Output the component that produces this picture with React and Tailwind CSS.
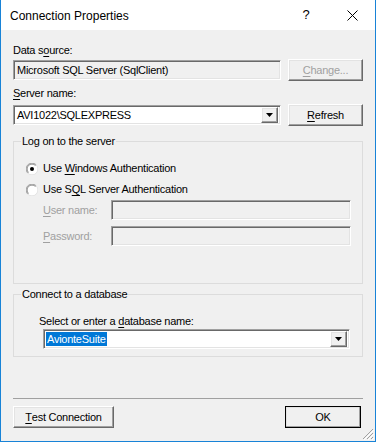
import React from "react";

const sunken =
  "border border-t-[#a0a0a0] border-l-[#a0a0a0] border-b-white border-r-white shadow-[inset_1px_1px_0_#696969,inset_-1px_-1px_0_#e3e3e3]";
const raised =
  "border border-t-white border-l-white border-b-[#696969] border-r-[#696969] shadow-[inset_-1px_-1px_0_#a0a0a0,inset_1px_1px_0_#e3e3e3] bg-[#f0f0f0]";

function Key({ children }) {
  return <span className="underline underline-offset-[2px]">{children}</span>;
}

function Radio({ checked }) {
  return (
    <svg width="12" height="12" viewBox="0 0 12 12" className="shrink-0">
      <circle cx="6" cy="6" r="5.5" fill="#fff" />
      <path d="M1.8 10.2 A5.5 5.5 0 0 1 10.2 1.8" fill="none" stroke="#a0a0a0" strokeWidth="1" />
      <path d="M10.2 1.8 A5.5 5.5 0 0 1 1.8 10.2" fill="none" stroke="#e3e3e3" strokeWidth="1" />
      <path d="M2.5 9.5 A4.5 4.5 0 0 1 9.5 2.5" fill="none" stroke="#8a8a8a" strokeWidth="1" />
      {checked && <circle cx="6" cy="6" r="2" fill="#000" />}
    </svg>
  );
}

function DropButton() {
  return (
    <div className={`w-[17px] h-[16px] flex items-center justify-center ${raised}`}>
      <svg width="7" height="4" viewBox="0 0 7 4">
        <path d="M0 0h7L3.5 4z" fill="#000" />
      </svg>
    </div>
  );
}

function Button({ children, className = "", disabled }) {
  return (
    <div
      className={`h-[22px] flex items-center justify-center ${raised} ${
        disabled ? "text-[#a0a0a0]" : "text-black"
      } ${className}`}
    >
      {children}
    </div>
  );
}

export default function App() {
  return (
    <div className="w-[376px] h-[442px] flex flex-col bg-[#f0f0f0] border-x border-b border-[#1883d7] font-['Liberation_Sans',Arial,sans-serif] text-[11px] leading-[13px] tracking-[-0.25px] text-black relative overflow-hidden">
      {/* title bar */}
      <div className="h-[30px] shrink-0 bg-white flex items-start">
        <div className="flex-1 pl-[9px] pt-[8px] text-[12px] leading-[16px] tracking-normal">
          Connection Properties
        </div>
        <div className="w-[46px] pt-[7px] text-center text-[13px] leading-[16px] tracking-normal">?</div>
        <div className="w-[46px] h-[30px] flex items-center justify-center">
          <svg width="11" height="11" viewBox="0 0 11 11">
            <path d="M0.5 0.5L10.5 10.5M10.5 0.5L0.5 10.5" stroke="#000" strokeWidth="1" />
          </svg>
        </div>
      </div>

      {/* body */}
      <div className="flex-1 flex flex-col px-[12px]">
        <div className="mt-[14px]">
          Data s<Key>o</Key>urce:
        </div>
        <div className="mt-[2px] h-[22px] flex items-center gap-[7px]">
          <div className={`w-[268px] h-[20px] flex items-center pl-[3px] bg-[#f0f0f0] ${sunken}`}>
            Microsoft SQL Server (SqlClient)
          </div>
          <Button className="w-[75px]" disabled>
            <Key>C</Key>hange...
          </Button>
        </div>

        <div className="mt-[6px]">
          <Key>S</Key>erver name:
        </div>
        <div className="mt-[4px] h-[22px] flex items-center gap-[7px]">
          <div className={`w-[268px] h-[20px] flex items-center pl-[3px] pr-[2px] bg-white ${sunken}`}>
            <span className="flex-1">AVI1022\SQLEXPRESS</span>
            <DropButton />
          </div>
          <Button className="w-[75px]">
            <Key>R</Key>efresh
          </Button>
        </div>

        <fieldset className="mt-[9px] h-[149px] border border-[#dcdcdc]">
          <legend className="ml-[7px] px-[1px]">Log on to the server</legend>
          <div className="pt-[14px] pl-[12px] flex flex-col">
            <div className="h-[13px] flex items-center gap-[5px]">
              <Radio checked />
              <span>
                Use <Key>W</Key>indows Authentication
              </span>
            </div>
            <div className="mt-[8px] h-[13px] flex items-center gap-[5px]">
              <Radio />
              <span>
                Use S<Key>Q</Key>L Server Authentication
              </span>
            </div>
            <div className="mt-[4px] flex items-center pl-[17px] text-[#a0a0a0]">
              <div className="w-[68px]">
                <Key>U</Key>ser name:
              </div>
              <div className={`w-[240px] h-[20px] bg-[#f0f0f0] ${sunken}`} />
            </div>
            <div className="mt-[6px] flex items-center pl-[17px] text-[#a0a0a0]">
              <div className="w-[68px]">
                <Key>P</Key>assword:
              </div>
              <div className={`w-[240px] h-[20px] bg-[#f0f0f0] ${sunken}`} />
            </div>
          </div>
        </fieldset>

        <fieldset className="mt-[4px] h-[69px] border border-[#dcdcdc]">
          <legend className="ml-[7px] px-[1px]">Connect to a database</legend>
          <div className="pt-[14px] pl-[25px] flex flex-col">
            <div>
              Select or enter a <Key>d</Key>atabase name:
            </div>
            <div className={`mt-[1px] ml-[4px] w-[307px] h-[20px] flex items-center pl-[2px] pr-[2px] bg-white ${sunken}`}>
              <div className="flex-1">
                <span className="bg-[#0078d7] text-white px-[1px] py-[1px]">AvionteSuite</span>
              </div>
              <DropButton />
            </div>
          </div>
        </fieldset>

        {/* footer */}
        <div className="mt-auto border-t border-[#a0a0a0] pt-[7px] pb-[13px] flex items-center">
          <Button className="w-[101px]">
            <Key>T</Key>est Connection
          </Button>
          <Button className="ml-auto mr-[2px] w-[76px] outline outline-1 outline-[#000] -outline-offset-1">
            OK
          </Button>
        </div>
      </div>

      {/* resize grip */}
      <svg width="12" height="12" viewBox="0 0 12 12" className="absolute right-[1px] bottom-[1px]">
        <path d="M11 1L1 11M11 5L5 11M11 9L9 11" stroke="#a0a0a0" strokeWidth="1" />
        <path d="M12 2L2 12M12 6L6 12M12 10L10 12" stroke="#fff" strokeWidth="1" />
      </svg>
    </div>
  );
}
